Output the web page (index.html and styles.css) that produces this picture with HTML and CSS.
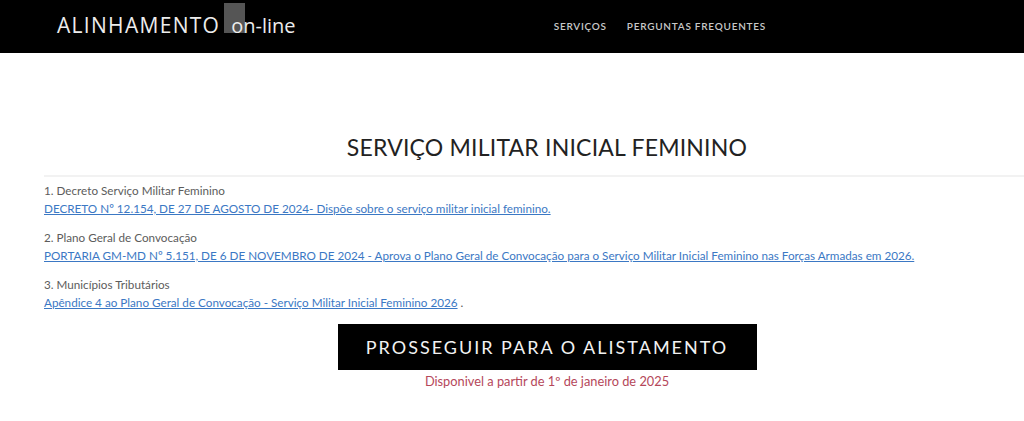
FILE: index.html
```html
<!DOCTYPE html>
<html lang="pt">
<head>
<meta charset="utf-8">
<link rel="stylesheet" href="styles.css">
</head>
<body>
<header class="topbar">
  <div class="logo"><span class="logo-main">ALINHAMENTO</span><span class="logo-sub"><span class="logo-box"></span><span class="logo-text">on-line</span></span></div>
  <nav class="nav">
    <a href="#">SERVIÇOS</a>
    <a href="#">PERGUNTAS FREQUENTES</a>
  </nav>
</header>
<main class="content">
  <h1 class="title">SERVIÇO MILITAR INICIAL FEMININO</h1>
  <div class="docs">
    <div class="item">
      <div class="label">1. Decreto Serviço Militar Feminino</div>
      <a class="link" href="#">DECRETO Nº 12.154, DE 27 DE AGOSTO DE 2024- Dispõe sobre o serviço militar inicial feminino.</a>
    </div>
    <div class="item">
      <div class="label">2. Plano Geral de Convocação</div>
      <a class="link" href="#">PORTARIA GM-MD Nº 5.151, DE 6 DE NOVEMBRO DE 2024 - Aprova o Plano Geral de Convocação para o Serviço Militar Inicial Feminino nas Forças Armadas em 2026.</a>
    </div>
    <div class="item">
      <div class="label">3. Municípios Tributários</div>
      <span><a class="link" href="#">Apêndice 4 ao Plano Geral de Convocação - Serviço Militar Inicial Feminino 2026</a> <span class="dot">.</span></span>
    </div>
  </div>
  <div class="cta">
    <a class="btn" href="#">PROSSEGUIR PARA O ALISTAMENTO</a>
    <div class="note">Disponivel a partir de 1º de janeiro de 2025</div>
  </div>
</main>
</body>
</html>
```
FILE: styles.css
```css
* { box-sizing: border-box; }
body {
  margin: 0;
  background: #fff;
  font-family: "Lato", "Open Sans", sans-serif;
  color: #555;
}
.topbar {
  height: 53px;
  background: #000;
  display: flex;
  align-items: center;
  justify-content: space-between;
  padding: 0 258px 0 57px;
}
.logo {
  display: flex;
  align-items: baseline;
  color: #ececec;
  font-family: "Open Sans", sans-serif;
  font-size: 21px;
  line-height: 20px;
  margin-top: -2px;
}
.logo-main {
  letter-spacing: 1.3px;
}
.logo-sub {
  position: relative;
  display: inline-block;
  margin-left: 11px;
  font-size: 20px;
  isolation: isolate;
}
.logo-box {
  position: absolute;
  left: -7px;
  top: -13px;
  width: 21px;
  height: 30px;
  background: #555;
  z-index: -1;
}
.logo-text {
  position: relative;
}
.nav {
  display: flex;
  gap: 20px;
  margin-top: -2px;
}
.nav a {
  color: #c8c8c8;
  text-decoration: none;
  font-size: 10px;
  letter-spacing: 0.75px;
  font-weight: 600;
}
.content {
  padding: 0 0 0 44px;
}
.title {
  margin: 80px 0 0;
  padding: 0 0 14px 26px;
  text-align: center;
  font-weight: 400;
  font-size: 23px;
  color: #222;
  letter-spacing: 0.2px;
  border-bottom: 2px solid #f2f2f2;
}
.docs {
  padding-top: 4px;
  display: flex;
  flex-direction: column;
  gap: 11px;
}
.item {
  display: flex;
  flex-direction: column;
  font-size: 11.7px;
  line-height: 18px;
}
.label { color: #5c5c5c; }
.link {
  color: #3b78c4;
  text-decoration: underline;
}
.dot { color: #555; }
.cta {
  display: flex;
  flex-direction: column;
  align-items: center;
  margin-top: 13px;
  margin-left: -44px;
  padding-left: 70px;
}
.btn {
  width: 419px;
  height: 46px;
  background: #000;
  color: #f2f2f2;
  text-decoration: none;
  display: flex;
  align-items: center;
  justify-content: center;
  font-size: 18px;
  letter-spacing: 2px;
  font-weight: 400;
}
.note {
  margin-top: 3px;
  color: #b5475a;
  font-size: 12.8px;
}
```
